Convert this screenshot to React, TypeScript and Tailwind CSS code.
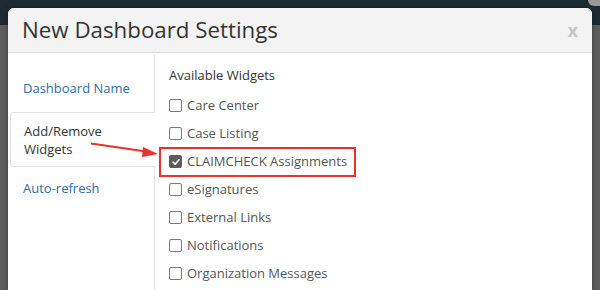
const widgets = [
	{ name: "Care Center", checked: false },
	{ name: "Case Listing", checked: false },
	{ name: "CLAIMCHECK Assignments", checked: true },
	{ name: "eSignatures", checked: false },
	{ name: "External Links", checked: false },
	{ name: "Notifications", checked: false },
	{ name: "Organization Messages", checked: false },
];

function Checkbox({ checked }: { checked: boolean }) {
	if (checked) {
		return (
			<span className="flex h-[13px] w-[13px] items-center justify-center rounded-[2px] bg-[#5c5c5c]">
				<svg viewBox="0 0 12 12" className="h-[10px] w-[10px]">
					<path d="M2.5 6.2 L5 8.6 L9.6 3.4" fill="none" stroke="#fff" strokeWidth="1.9" strokeLinecap="round" strokeLinejoin="round" />
				</svg>
			</span>
		);
	}
	return <span className="block h-[13px] w-[13px] rounded-[2px] border border-[#7a7a7a] bg-white" />;
}

export default function App() {
	return (
		<div className="relative h-[290px] w-[600px] overflow-hidden bg-[#5e5e5e] font-['Open_Sans',sans-serif]">
			{/* page behind the modal */}
			<div className="h-[25px] bg-[#1d2b35]" />
			<div className="absolute right-0 top-0 h-[6px] w-[12px] rounded-bl-full bg-[#9a9a9a]" />

			<div className="absolute left-[8px] top-[8px] w-[584px] rounded-t-[6px] bg-white shadow-[0_0_6px_rgba(0,0,0,0.35)]">
				<div className="flex h-[45px] items-center justify-between rounded-t-[6px] border-b border-[#dcdcdc] bg-[#f3f3f3] pl-[14px] pr-[14px]">
					<h1 className="text-[22.3px] leading-none text-[#333]">New Dashboard Settings</h1>
					<span className="text-[18px] font-bold leading-none text-[#c6c6c6]">x</span>
				</div>

				<div className="flex h-[240px]">
					<div className="flex w-[147px] flex-col pt-[2px]">
						<div className="h-[57px] border-r border-[#e3e3e3] pl-[15px] pt-[24px] text-[13px] text-[#2a6ea6]">
							Dashboard Name
						</div>
						<div className="ml-[2px] h-[55px] rounded-l-[4px] border border-r-0 border-[#e3e3e3] pl-[13px] pt-[9px] text-[13px] leading-[18px] text-[#333]">
							<div>Add/Remove</div>
							<div>Widgets</div>
						</div>
						<div className="flex-1 border-r border-[#e3e3e3] pl-[15px] pt-[12px] text-[13px] leading-[18px] text-[#2a6ea6]">
							Auto-refresh
						</div>
					</div>

					<div className="flex-1 pl-[14px] pt-[13px]">
						<div className="text-[13px] text-[#333]">Available Widgets</div>
						<div className="mt-[6px] flex flex-col">
							{widgets.map((w) => (
								<div key={w.name} className="flex h-[28px] items-center">
									<div
										className={
											w.checked
												? "-ml-[10px] flex h-[30px] items-center gap-[5px] border-2 border-[#e8322b] pl-[8px] pr-[7px]"
												: "flex items-center gap-[5px]"
										}
									>
										<Checkbox checked={w.checked} />
										<span className="text-[13px] text-[#555]">{w.name}</span>
									</div>
								</div>
							))}
						</div>
					</div>
				</div>
			</div>

			{/* annotation arrow */}
			<svg className="absolute left-0 top-0" width="600" height="290">
				<line x1="91" y1="143.5" x2="146" y2="151.5" stroke="#e8322b" strokeWidth="2" />
				<polygon points="158,154 143,147 142,157" fill="#e8322b" />
			</svg>
		</div>
	);
}
